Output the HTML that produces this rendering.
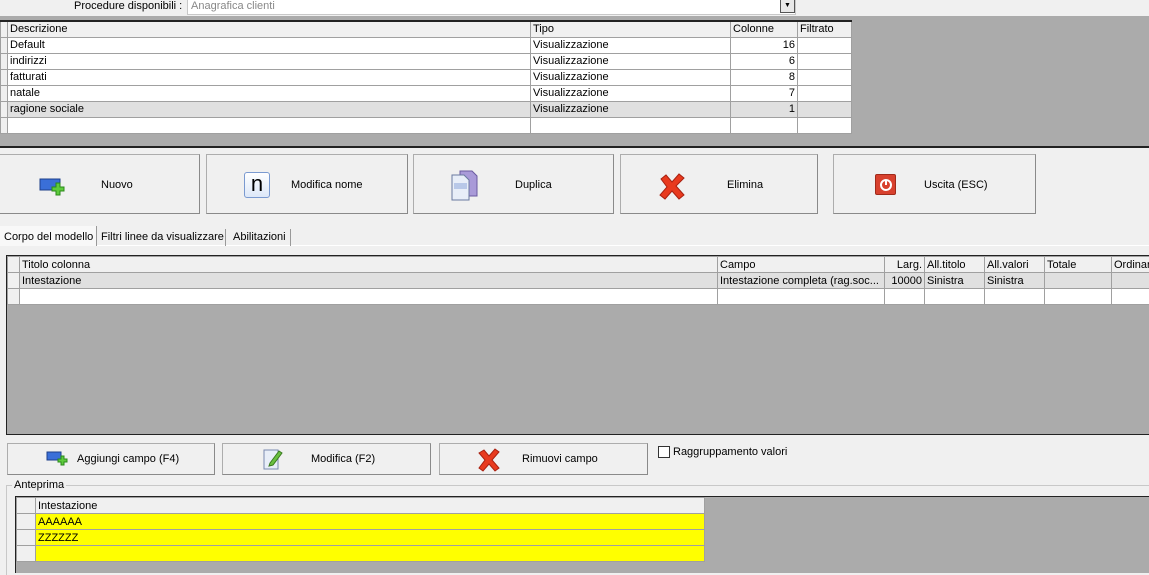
<!DOCTYPE html>
<html><head><meta charset="utf-8"><style>
*{box-sizing:border-box;margin:0;padding:0}
body{width:1149px;height:573px;overflow:hidden;background:#f0f0f0;font-family:"Liberation Sans",sans-serif;font-size:11px;color:#000;position:relative}
.a{position:absolute}
.g{background:#ababab}
table{border-collapse:collapse;position:absolute;table-layout:fixed}
td{border:1px solid #a0a0a0;height:16px;padding:0 2px;white-space:nowrap;overflow:hidden;font-size:11px;line-height:14px}
tr.h td{background:#f0f0f0}
td.i{background:#f0f0f0}
.btn{position:absolute;background:#f0f0f0;border:1px solid #adadad;border-right-color:#8a8a8a;border-bottom-color:#8a8a8a;display:flex;align-items:center}
.r{text-align:right}
</style></head><body>
<div class="a" style="left:74px;top:0;font-size:11px">Procedure disponibili :</div>
<div class="a" style="left:187px;top:-1px;width:609px;height:16px;background:#fff;border:1px solid #c8c8c8;color:#888;padding-left:3px;line-height:13px">Anagrafica clienti</div>
<div class="a" style="left:780px;top:-1px;width:15px;height:14px;background:#e8e8e8;border:1px solid #555;font-size:7px;text-align:center;line-height:12px">▼</div>

<div class="a g" style="left:0;top:16px;width:1149px;height:132px;border-bottom:2px solid #222"></div>
<table style="left:0;top:20px;width:852px;border-top:2px solid #222">
<colgroup><col style="width:7px"><col style="width:523px"><col style="width:200px"><col style="width:67px"><col style="width:54px"></colgroup>
<tr class="h"><td class="i"></td><td>Descrizione</td><td>Tipo</td><td>Colonne</td><td>Filtrato</td></tr>
<tr style="background:#fff"><td class="i"></td><td>Default</td><td>Visualizzazione</td><td class="r">16</td><td></td></tr>
<tr style="background:#fff"><td class="i"></td><td>indirizzi</td><td>Visualizzazione</td><td class="r">6</td><td></td></tr>
<tr style="background:#fff"><td class="i"></td><td>fatturati</td><td>Visualizzazione</td><td class="r">8</td><td></td></tr>
<tr style="background:#fff"><td class="i"></td><td>natale</td><td>Visualizzazione</td><td class="r">7</td><td></td></tr>
<tr style="background:#e0e0e0"><td class="i"></td><td>ragione sociale</td><td>Visualizzazione</td><td class="r">1</td><td></td></tr>
<tr style="background:#fff"><td class="i"></td><td></td><td></td><td></td><td></td></tr>
</table>

<div class="btn" style="left:-1px;top:154px;width:201px;height:60px"><svg class="a" style="left:39px;top:22px" width="26" height="20"><rect x="1" y="2" width="20" height="11" fill="#3a6fd8" stroke="#1e3f8a"/><path d="M15 8h4v-4h4v4h4v4h-4v4h-4v-4h-4z" transform="translate(-2,2)" fill="#5ecb3c" stroke="#2a8a1a"/></svg><span class="a" style="left:101px;top:24px">Nuovo</span></div>
<div class="btn" style="left:206px;top:154px;width:202px;height:60px"><div class="a" style="left:37px;top:17px;width:26px;height:26px;border:1px solid #7a9ad0;border-radius:3px;background:linear-gradient(#fff,#dde8f8);font-size:22px;text-align:center;line-height:22px">n</div><span class="a" style="left:84px;top:24px">Modifica nome</span></div>
<div class="btn" style="left:413px;top:154px;width:201px;height:60px"><svg class="a" style="left:36px;top:14px" width="30" height="32"><path d="M10 2h12l5 5v20h-17z" fill="#a99ad8" stroke="#6a5aa0"/><path d="M2 6h12l5 5v20h-17z" fill="#e8eef8" stroke="#6a7aa0"/><rect x="4" y="14" width="13" height="6" fill="#b8c8e8"/></svg><span class="a" style="left:101px;top:24px">Duplica</span></div>
<div class="btn" style="left:620px;top:154px;width:198px;height:60px"><svg class="a" style="left:37px;top:18px" width="28" height="28"><path d="M3 6l5-4 6 7 7-8 5 4-8 8 8 9-5 4-7-8-7 8-5-4 7-8z" fill="#e83a1e" stroke="#a82010"/></svg><span class="a" style="left:106px;top:24px">Elimina</span></div>
<div class="btn" style="left:833px;top:154px;width:203px;height:60px"><div class="a" style="left:41px;top:19px;width:21px;height:21px;background:#d8412e;border-radius:2px;border:1px solid #a02a1a"></div><svg class="a" style="left:44px;top:22px" width="16" height="16"><circle cx="8" cy="8" r="5" fill="none" stroke="#fff" stroke-width="2"/><path d="M8 3v5" stroke="#fff" stroke-width="2"/></svg><span class="a" style="left:90px;top:24px">Uscita (ESC)</span></div>

<div class="a" style="left:0;top:245px;width:1149px;height:1px;background:#fff"></div>
<div class="a" style="left:0;top:226px;width:97px;height:20px;background:#f8f8f8;border-right:1px solid #999;padding:5px 0 0 4px">Corpo del modello</div>
<div class="a" style="left:97px;top:229px;width:129px;height:17px;border-right:1px solid #999;padding:2px 0 0 4px">Filtri linee da visualizzare</div>
<div class="a" style="left:227px;top:229px;width:64px;height:17px;border-right:1px solid #999;padding:2px 0 0 6px">Abilitazioni</div>

<div class="a g" style="left:6px;top:255px;width:1143px;height:180px;border:1px solid #222;border-right:none"></div>
<table style="left:7px;top:256px;width:1160px">
<colgroup><col style="width:12px"><col style="width:698px"><col style="width:167px"><col style="width:40px"><col style="width:60px"><col style="width:60px"><col style="width:67px"><col style="width:56px"></colgroup>
<tr class="h"><td class="i"></td><td>Titolo colonna</td><td>Campo</td><td class="r">Larg.</td><td>All.titolo</td><td>All.valori</td><td>Totale</td><td>Ordinar</td></tr>
<tr style="background:#e0e0e0"><td class="i"></td><td>Intestazione</td><td>Intestazione completa (rag.soc...</td><td class="r">10000</td><td>Sinistra</td><td>Sinistra</td><td></td><td></td></tr>
<tr style="background:#fff"><td class="i"></td><td></td><td></td><td></td><td></td><td></td><td></td><td></td></tr>
</table>

<div class="btn" style="left:7px;top:443px;width:208px;height:32px"><svg class="a" style="left:38px;top:7px" width="22" height="16"><rect x="1" y="1" width="14" height="8" fill="#3a6fd8" stroke="#1e3f8a"/><path d="M12 8h3v-3h3v3h3v3h-3v3h-3v-3h-3z" fill="#5ecb3c" stroke="#2a8a1a"/></svg><span class="a" style="left:69px;top:9px">Aggiungi campo (F4)</span></div>
<div class="btn" style="left:222px;top:443px;width:209px;height:32px"><svg class="a" style="left:39px;top:3px" width="22" height="24"><path d="M2 3h14v19h-14z" fill="#e8eef8" stroke="#7a8ab0"/><path d="M8 16l9-12 3 2-9 12-4 1z" fill="#6ac040" stroke="#3a7a20"/></svg><span class="a" style="left:88px;top:9px">Modifica (F2)</span></div>
<div class="btn" style="left:439px;top:443px;width:209px;height:32px"><svg class="a" style="left:37px;top:4px" width="24" height="24"><path d="M2 5l5-3 5 6 6-7 4 3-7 8 7 8-4 3-6-7-6 7-4-3 6-8z" fill="#e83a1e" stroke="#a82010"/></svg><span class="a" style="left:82px;top:9px">Rimuovi campo</span></div>
<div class="a" style="left:658px;top:446px;width:12px;height:12px;background:#fff;border:1px solid #333"></div>
<span class="a" style="left:673px;top:446px">Raggruppamento valori</span>

<div class="a" style="left:6px;top:485px;width:1143px;height:90px;border-top:1px solid #c8c8c8;border-left:1px solid #c8c8c8"></div>
<span class="a" style="left:12px;top:479px;background:#f0f0f0;padding:0 2px">Anteprima</span>
<div class="a g" style="left:15px;top:496px;width:1134px;height:77px;border-top:1px solid #222;border-left:1px solid #222"></div>
<table style="left:16px;top:497px;width:688px">
<colgroup><col style="width:19px"><col style="width:669px"></colgroup>
<tr class="h"><td class="i"></td><td>Intestazione</td></tr>
<tr style="background:#ffff00"><td class="i"></td><td>AAAAAA</td></tr>
<tr style="background:#ffff00"><td class="i"></td><td>ZZZZZZ</td></tr>
<tr style="background:#ffff00"><td class="i"></td><td></td></tr>
</table>
</body></html>
